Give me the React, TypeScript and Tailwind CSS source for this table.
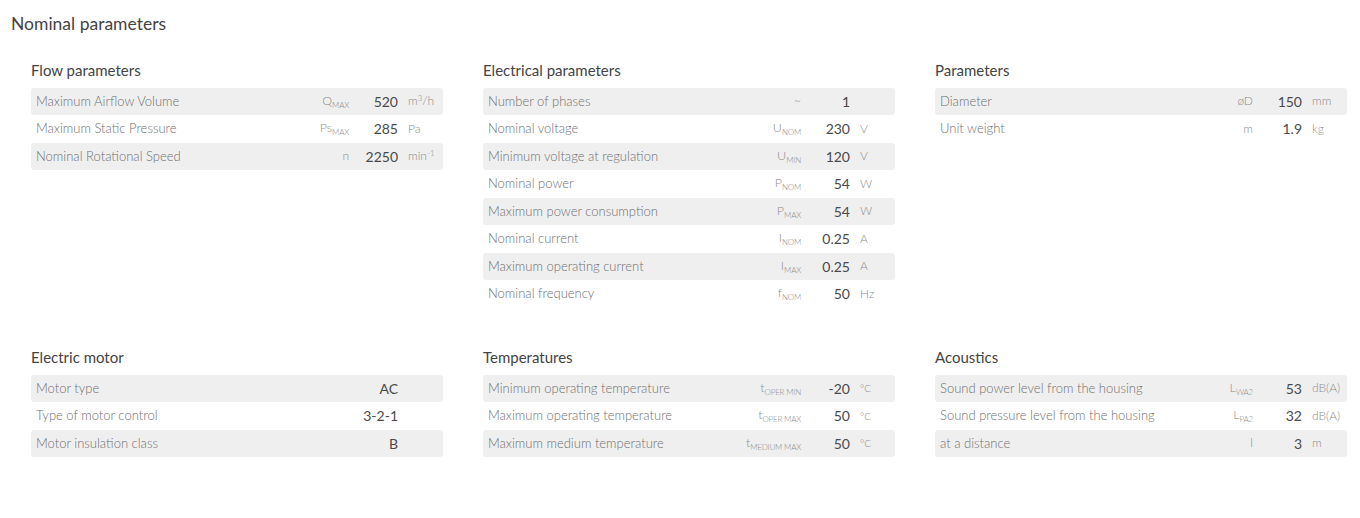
import { ReactNode } from 'react';

type Row = {
  label: string;
  symbol?: ReactNode;
  value: string;
  unit?: ReactNode;
};

type Section = {
  title: string;
  rows: Row[];
};

const sym = (base: string, sub?: string) => (
  <span className="text-[12.5px]">
    {base}
    {sub ? <span className="relative top-[3px] text-[8px] tracking-tight">{sub}</span> : null}
  </span>
);

const deg = <span className="text-[10px]">°C</span>;

const sections: Section[] = [
  {
    title: 'Flow parameters',
    rows: [
      {
        label: 'Maximum Airflow Volume',
        symbol: sym('Q', 'MAX'),
        value: '520',
        unit: (
          <span>
            m<sup className="text-[8px]">3</sup>/h
          </span>
        ),
      },
      { label: 'Maximum Static Pressure', symbol: sym('Ps', 'MAX'), value: '285', unit: 'Pa' },
      {
        label: 'Nominal Rotational Speed',
        symbol: 'n',
        value: '2250',
        unit: (
          <span>
            min<sup className="text-[8px]">-1</sup>
          </span>
        ),
      },
    ],
  },
  {
    title: 'Electrical parameters',
    rows: [
      { label: 'Number of phases', symbol: '~', value: '1' },
      { label: 'Nominal voltage', symbol: sym('U', 'NOM'), value: '230', unit: 'V' },
      { label: 'Minimum voltage at regulation', symbol: sym('U', 'MIN'), value: '120', unit: 'V' },
      { label: 'Nominal power', symbol: sym('P', 'NOM'), value: '54', unit: 'W' },
      { label: 'Maximum power consumption', symbol: sym('P', 'MAX'), value: '54', unit: 'W' },
      { label: 'Nominal current', symbol: sym('I', 'NOM'), value: '0.25', unit: 'A' },
      { label: 'Maximum operating current', symbol: sym('I', 'MAX'), value: '0.25', unit: 'A' },
      { label: 'Nominal frequency', symbol: sym('f', 'NOM'), value: '50', unit: 'Hz' },
    ],
  },
  {
    title: 'Parameters',
    rows: [
      { label: 'Diameter', symbol: 'øD', value: '150', unit: 'mm' },
      { label: 'Unit weight', symbol: 'm', value: '1.9', unit: 'kg' },
    ],
  },
  {
    title: 'Electric motor',
    rows: [
      { label: 'Motor type', value: 'AC' },
      { label: 'Type of motor control', value: '3-2-1' },
      { label: 'Motor insulation class', value: 'B' },
    ],
  },
  {
    title: 'Temperatures',
    rows: [
      { label: 'Minimum operating temperature', symbol: sym('t', 'OPER MIN'), value: '-20', unit: deg },
      { label: 'Maximum operating temperature', symbol: sym('t', 'OPER MAX'), value: '50', unit: deg },
      { label: 'Maximum medium temperature', symbol: sym('t', 'MEDIUM MAX'), value: '50', unit: deg },
    ],
  },
  {
    title: 'Acoustics',
    rows: [
      { label: 'Sound power level from the housing', symbol: sym('L', 'WA2'), value: '53', unit: 'dB(A)' },
      { label: 'Sound pressure level from the housing', symbol: sym('L', 'PA2'), value: '32', unit: 'dB(A)' },
      { label: 'at a distance', symbol: 'l', value: '3', unit: 'm' },
    ],
  },
];

function ParamTable({ section }: { section: Section }) {
  return (
    <div>
      <h3 className="text-[15px] leading-[20px] text-[#444] mb-[8px]">{section.title}</h3>
      <div className="flex flex-col gap-px">
        {section.rows.map((row, i) => (
          <div
            key={row.label}
            className={`flex items-center h-[26.5px] pl-[5px] rounded-[3px] ${i % 2 === 0 ? 'bg-[#efefef]' : ''}`}
          >
            <span className="flex-1 text-[13px] font-light text-[#707070] truncate">{row.label}</span>
            <span className="shrink-0 text-right text-[12px] font-light text-[#8c8c8c]">{row.symbol}</span>
            <span className="w-[49px] shrink-0 text-right text-[14px] text-[#4a4a4a]">{row.value}</span>
            <span className="w-[45px] shrink-0 pl-[10px] text-[12px] font-light text-[#8c8c8c] whitespace-nowrap">
              {row.unit}
            </span>
          </div>
        ))}
      </div>
    </div>
  );
}

export default function App() {
  return (
    <div className="bg-white w-[1360px] h-[518px] pt-[12px] font-['Lato','Liberation_Sans',sans-serif]">
      <h2 className="pl-[11px] text-[17.5px] leading-[24px] text-[#444]">Nominal parameters</h2>
      <div className="grid grid-cols-[412px_412px_412px] gap-x-[40px] gap-y-[40px] px-[31px] mt-[24px]">
        {sections.map((s) => (
          <ParamTable key={s.title} section={s} />
        ))}
      </div>
    </div>
  );
}
